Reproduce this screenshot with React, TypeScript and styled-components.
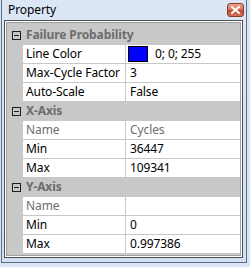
import styled, { createGlobalStyle } from 'styled-components'

const GlobalStyle = createGlobalStyle`
  html, body {
    margin: 0;
    padding: 0;
    background: #dae5f3;
  }
  body {
    font-family: "Noto Sans", "Liberation Sans", sans-serif;
    font-size: 12px;
  }
`

const Window = styled.div`
  box-sizing: border-box;
  width: 246px;
  height: 263px;
  margin-left: 1px;
  border: 1px solid #5d6f88;
  border-top: none;
  background: linear-gradient(#dce7f5, #d3e0f1);
  display: flex;
  flex-direction: column;
`

const TitleBar = styled.div`
  height: 20px;
  flex: none;
  display: flex;
  align-items: center;
  justify-content: space-between;
  padding: 0 2px 0 6px;
`

const Title = styled.span`
  color: #000;
  font-size: 12px;
  line-height: 20px;
  letter-spacing: -0.1px;
`

const CloseButton = styled.div`
  box-sizing: border-box;
  width: 17px;
  height: 14px;
  border: 1px solid #8c3a2a;
  border-radius: 3px;
  background: linear-gradient(#e9a592 0%, #d6725c 45%, #c4492f 55%, #d5735a 100%);
  display: flex;
  align-items: center;
  justify-content: center;
`

const Client = styled.div`
  flex: 1;
  margin: 0 3px 4px 2px;
  border: 1px solid #4f4f4f;
  display: flex;
`

const Bevel = styled.div`
  flex: 1;
  border: 1px solid #fff;
  display: flex;
`

const Grid = styled.div`
  flex: 1;
  border: 1px solid #a0a0a0;
  background: #c8c8c8;
  padding-top: 3px;
  display: flex;
  flex-direction: column;
  gap: 1px;
`

const Row = styled.div`
  height: 18px;
  display: grid;
  grid-template-columns: 15px 102px 1fr;
  column-gap: 1px;
  line-height: 18px;
`

const Toggle = styled.div`
  display: flex;
  align-items: center;
  justify-content: flex-end;
  padding-right: 1px;
`

const Category = styled.div`
  grid-column: 2 / 4;
  padding-left: 3px;
  font-weight: bold;
  color: #6d6d6d;
  letter-spacing: -0.1px;
`

const Cell = styled.div<{ $muted?: boolean; $pad: number }>`
  background: #fff;
  padding-left: ${(p) => p.$pad}px;
  color: ${(p) => (p.$muted ? '#6d6d6d' : '#000')};
  white-space: nowrap;
  overflow: hidden;
  display: flex;
  align-items: center;
  letter-spacing: -0.1px;
`

const Swatch = styled.span`
  box-sizing: border-box;
  width: 20px;
  height: 16px;
  border: 1px solid #000;
  background: #0000ff;
  margin: 0 7px 0 -2px;
  flex: none;
`

type Prop = { name: string; value: string; muted?: boolean; color?: boolean }
type Section = { title: string; props: Prop[] }

const sections: Section[] = [
  {
    title: 'Failure Probability',
    props: [
      { name: 'Line Color', value: '0; 0; 255', color: true },
      { name: 'Max-Cycle Factor', value: '3' },
      { name: 'Auto-Scale', value: 'False' },
    ],
  },
  {
    title: 'X-Axis',
    props: [
      { name: 'Name', value: 'Cycles', muted: true },
      { name: 'Min', value: '36447' },
      { name: 'Max', value: '109341' },
    ],
  },
  {
    title: 'Y-Axis',
    props: [
      { name: 'Name', value: '', muted: true },
      { name: 'Min', value: '0' },
      { name: 'Max', value: '0.997386' },
    ],
  },
]

function Minus() {
  return (
    <svg width="9" height="9" viewBox="0 0 9 9">
      <rect x="0.5" y="0.5" width="8" height="8" fill="none" stroke="#1e1e1e" />
      <line x1="2" y1="4.5" x2="7" y2="4.5" stroke="#1e1e1e" />
    </svg>
  )
}

function App() {
  return (
    <>
      <GlobalStyle />
      <Window>
        <TitleBar>
          <Title>Property</Title>
          <CloseButton>
            <svg width="9" height="8" viewBox="0 0 9 8">
              <path d="M1 1 L8 7 M8 1 L1 7" stroke="#fff" strokeWidth="2" strokeLinecap="square" />
            </svg>
          </CloseButton>
        </TitleBar>
        <Client>
          <Bevel>
            <Grid>
              {sections.map((s) => (
                <div key={s.title} style={{ display: 'contents' }}>
                  <Row>
                    <Toggle>
                      <Minus />
                    </Toggle>
                    <Category>{s.title}</Category>
                  </Row>
                  {s.props.map((p) => (
                    <Row key={p.name}>
                      <span />
                      <Cell $pad={3} $muted={p.muted}>{p.name}</Cell>
                      <Cell $pad={4} $muted={p.muted}>
                        {p.color && <Swatch />}
                        {p.value}
                      </Cell>
                    </Row>
                  ))}
                </div>
              ))}
            </Grid>
          </Bevel>
        </Client>
      </Window>
    </>
  )
}

export default App
